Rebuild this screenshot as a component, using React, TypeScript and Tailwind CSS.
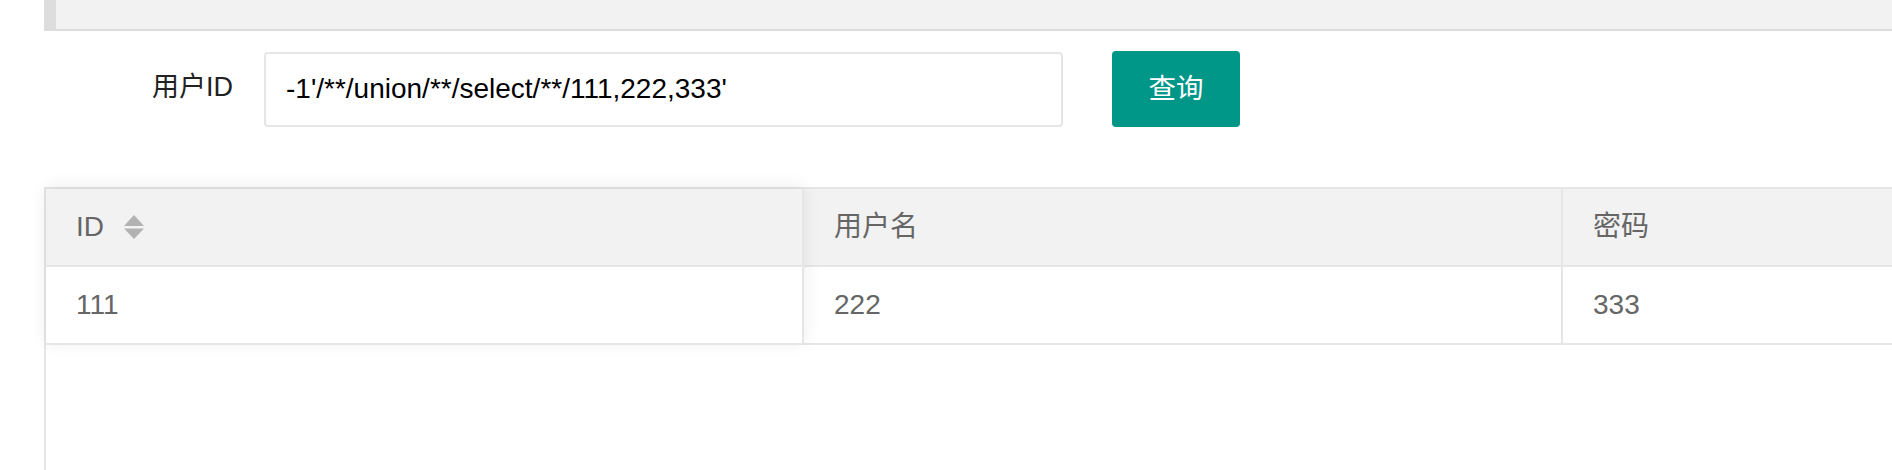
import { useState } from "react"

interface UserRow {
  id: string
  username: string
  password: string
}

const rows: UserRow[] = [{ id: "111", username: "222", password: "333" }]

function SortIcon() {
  return (
    <svg width="20" height="24" viewBox="0 0 20 24" className="ml-[20px] shrink-0">
      <polygon points="10,0 20,11 0,11" fill="#b2b2b2" />
      <polygon points="0,13.5 20,13.5 10,24" fill="#b2b2b2" />
    </svg>
  )
}

export default function App() {
  const [userId, setUserId] = useState("-1'/**/union/**/select/**/111,222,333'")

  return (
    <div
      className="h-[470px] w-[1892px] overflow-hidden bg-white pl-[44px]"
      style={{ fontFamily: '"Liberation Sans", "Noto Sans CJK SC", sans-serif' }}
    >
      <div className="w-[1900px]">
        {/* quote block at top, scrolled partly out of view */}
        <div className="h-[31px] border-b-2 border-l-[12px] border-[#dddddd] bg-[#f2f2f2]" />

        {/* search form */}
        <div className="mt-[20px] flex h-[76px] items-center">
          <label className="w-[220px] pr-[31px] pb-[3px] text-right text-[27px] leading-none text-[#222]">用户ID</label>
          <input
            value={userId}
            onChange={(event) => setUserId(event.target.value)}
            className="h-[75px] w-[799px] rounded-[4px] border-2 border-[#e6e6e6] bg-white pl-[20px] text-[28px] text-black outline-none"
          />
          <button className="ml-[49px] h-[76px] w-[128px] rounded-[4px] bg-[#009688] text-[27.5px] leading-none text-white">
            查询
          </button>
        </div>

        {/* result table */}
        <div className="mt-[60px] h-[400px] w-[2400px] border-l-2 border-t-2 border-[#e6e6e6] text-[28px] leading-none text-[#666]">
          <div className="flex">
            <div className="relative z-10 w-[758px] bg-white shadow-[0_-2px_16px_rgba(0,0,0,0.08)]">
              <div className="flex h-[78px] items-center border-b-2 border-r-2 border-[#e6e6e6] bg-[#f2f2f2] px-[30px]">
                <span>ID</span>
                <SortIcon />
              </div>
              {rows.map((row) => (
                <div key={row.id} className="flex h-[78px] items-center border-b-2 border-r-2 border-[#e6e6e6] px-[30px]">
                  {row.id}
                </div>
              ))}
            </div>
            <div className="flex-1">
              <div className="flex h-[78px] border-b-2 border-[#e6e6e6] bg-[#f2f2f2]">
                <div className="flex w-[759px] items-center border-r-2 border-[#e6e6e6] px-[30px]">用户名</div>
                <div className="flex w-[759px] items-center border-r-2 border-[#e6e6e6] px-[30px]">密码</div>
              </div>
              {rows.map((row) => (
                <div key={row.id} className="flex h-[78px] border-b-2 border-[#e6e6e6]">
                  <div className="flex w-[759px] items-center border-r-2 border-[#e6e6e6] px-[30px]">{row.username}</div>
                  <div className="flex w-[759px] items-center border-r-2 border-[#e6e6e6] px-[30px]">{row.password}</div>
                </div>
              ))}
            </div>
          </div>
        </div>
      </div>
    </div>
  )
}
